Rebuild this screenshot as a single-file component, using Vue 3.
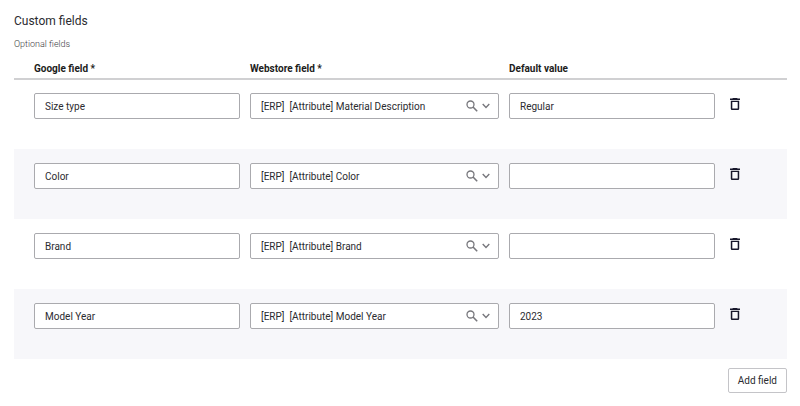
<script setup>
import { ref } from 'vue'

const options = [
  '[ERP]\u00a0 [Attribute] Material Description',
  '[ERP]\u00a0 [Attribute] Color',
  '[ERP]\u00a0 [Attribute] Brand',
  '[ERP]\u00a0 [Attribute] Model Year',
]

let nextId = 5
const rows = ref([
  { id: 1, google: 'Size type', webstore: options[0], fallback: 'Regular' },
  { id: 2, google: 'Color', webstore: options[1], fallback: '' },
  { id: 3, google: 'Brand', webstore: options[2], fallback: '' },
  { id: 4, google: 'Model Year', webstore: options[3], fallback: '2023' },
])

function addRow() {
  rows.value.push({ id: nextId++, google: '', webstore: '', fallback: '' })
}

function removeRow(id) {
  rows.value = rows.value.filter((row) => row.id !== id)
}
</script>

<template>
  <main class="panel">
    <h1 class="title">Custom fields</h1>
    <p class="subtitle">Optional fields</p>

    <table class="fields">
      <thead>
        <tr class="row head">
          <th id="col-google" scope="col">Google field *</th>
          <th id="col-webstore" scope="col">Webstore field *</th>
          <th id="col-default" scope="col">Default value</th>
        </tr>
      </thead>
      <tbody>
        <tr v-for="row in rows" :key="row.id" class="row item">
          <td>
            <input v-model="row.google" class="control" type="text" aria-labelledby="col-google" />
          </td>
          <td class="picker">
            <select v-model="row.webstore" class="control select" aria-labelledby="col-webstore">
              <option v-for="option in options" :key="option" :value="option">{{ option }}</option>
            </select>
            <span class="picker-icons" aria-hidden="true">
              <svg width="12" height="12" viewBox="0 0 12 12" fill="none" stroke="currentColor">
                <circle cx="4.5" cy="4.5" r="3.5" stroke-width="1.3" />
                <path d="M7 7 11.2 11.2" stroke-width="1.6" />
              </svg>
              <svg width="8" height="6" viewBox="0 0 8 6" fill="none" stroke="currentColor" stroke-width="1.4">
                <path d="M.7 1.1 4 4.4 7.3 1.1" />
              </svg>
            </span>
          </td>
          <td>
            <input v-model="row.fallback" class="control" type="text" aria-labelledby="col-default" />
          </td>
          <td>
            <button class="remove" type="button" aria-label="Remove field" @click="removeRow(row.id)">
              <svg width="10" height="12" viewBox="0 0 10 12" fill="currentColor">
                <path d="M3 0h4l.7.6H10V2H0V.6h2.300z" />
                <path fill-rule="evenodd" d="M.8 2.700h8.400v8.100Q9.200 12 8 12H2Q.8 12 .8 10.800zM2.300 4.100v6.500h5.400V4.100z" />
              </svg>
            </button>
          </td>
        </tr>
      </tbody>
    </table>

    <div class="actions">
      <button class="add" type="button" @click="addRow">Add field</button>
    </div>
  </main>
</template>

<style>
body {
  margin: 0;
  background: #fff;
}
</style>

<style scoped>
.panel {
  padding: 12px 13px 12px 14px;
  color: #2b2b30;
  font-family: Roboto, "Liberation Sans", sans-serif;
  font-size: 10px;
}

.title {
  margin: 0;
  font-size: 12px;
  font-weight: 400;
  line-height: 18px;
}

.subtitle {
  margin: 8px 0 0;
  color: #3c3c42;
  font-size: 9px;
  font-weight: 300;
  line-height: 12px;
}

.fields,
.fields thead,
.fields tbody {
  display: block;
}

.fields {
  border-spacing: 0;
}

.fields tbody {
  margin-top: -1px;
}

.row {
  display: grid;
  grid-template-columns: 206fr 249fr 206fr 62px;
  column-gap: 10px;
  padding-left: 20px;
}

.head {
  padding-top: 13px;
  padding-bottom: 3px;
  border-bottom: 2px solid #d0d0d2;
}

.head th {
  padding: 0;
  color: #1c1c20;
  font-weight: 700;
  line-height: 12px;
  text-align: left;
}

.item {
  box-sizing: border-box;
  height: 70px;
  padding-top: 14px;
}

.item:nth-child(even) {
  background: #f7f7fa;
}

.item td {
  min-width: 0;
  padding: 0;
}

.control {
  display: block;
  box-sizing: border-box;
  width: 100%;
  height: 26px;
  margin: 0;
  padding: 0 10px;
  border: 1px solid #aaaaae;
  border-radius: 2px;
  background: #fff;
  color: inherit;
  font: inherit;
}

.picker {
  position: relative;
}

.select {
  appearance: none;
  padding-right: 36px;
}

.picker-icons {
  position: absolute;
  top: 0;
  right: 9px;
  display: flex;
  align-items: center;
  gap: 4px;
  height: 26px;
  color: #77777c;
  pointer-events: none;
}

.remove {
  display: flex;
  margin: 0;
  padding: 5px;
  border: 0;
  background: none;
  color: #17172b;
  cursor: pointer;
}

.actions {
  display: flex;
  justify-content: flex-end;
  margin-top: 9px;
}

.add {
  height: 25px;
  padding: 0 9px;
  border: 1px solid #c4c4c8;
  border-radius: 2px;
  background: #fff;
  color: inherit;
  font: inherit;
  cursor: pointer;
}
</style>
